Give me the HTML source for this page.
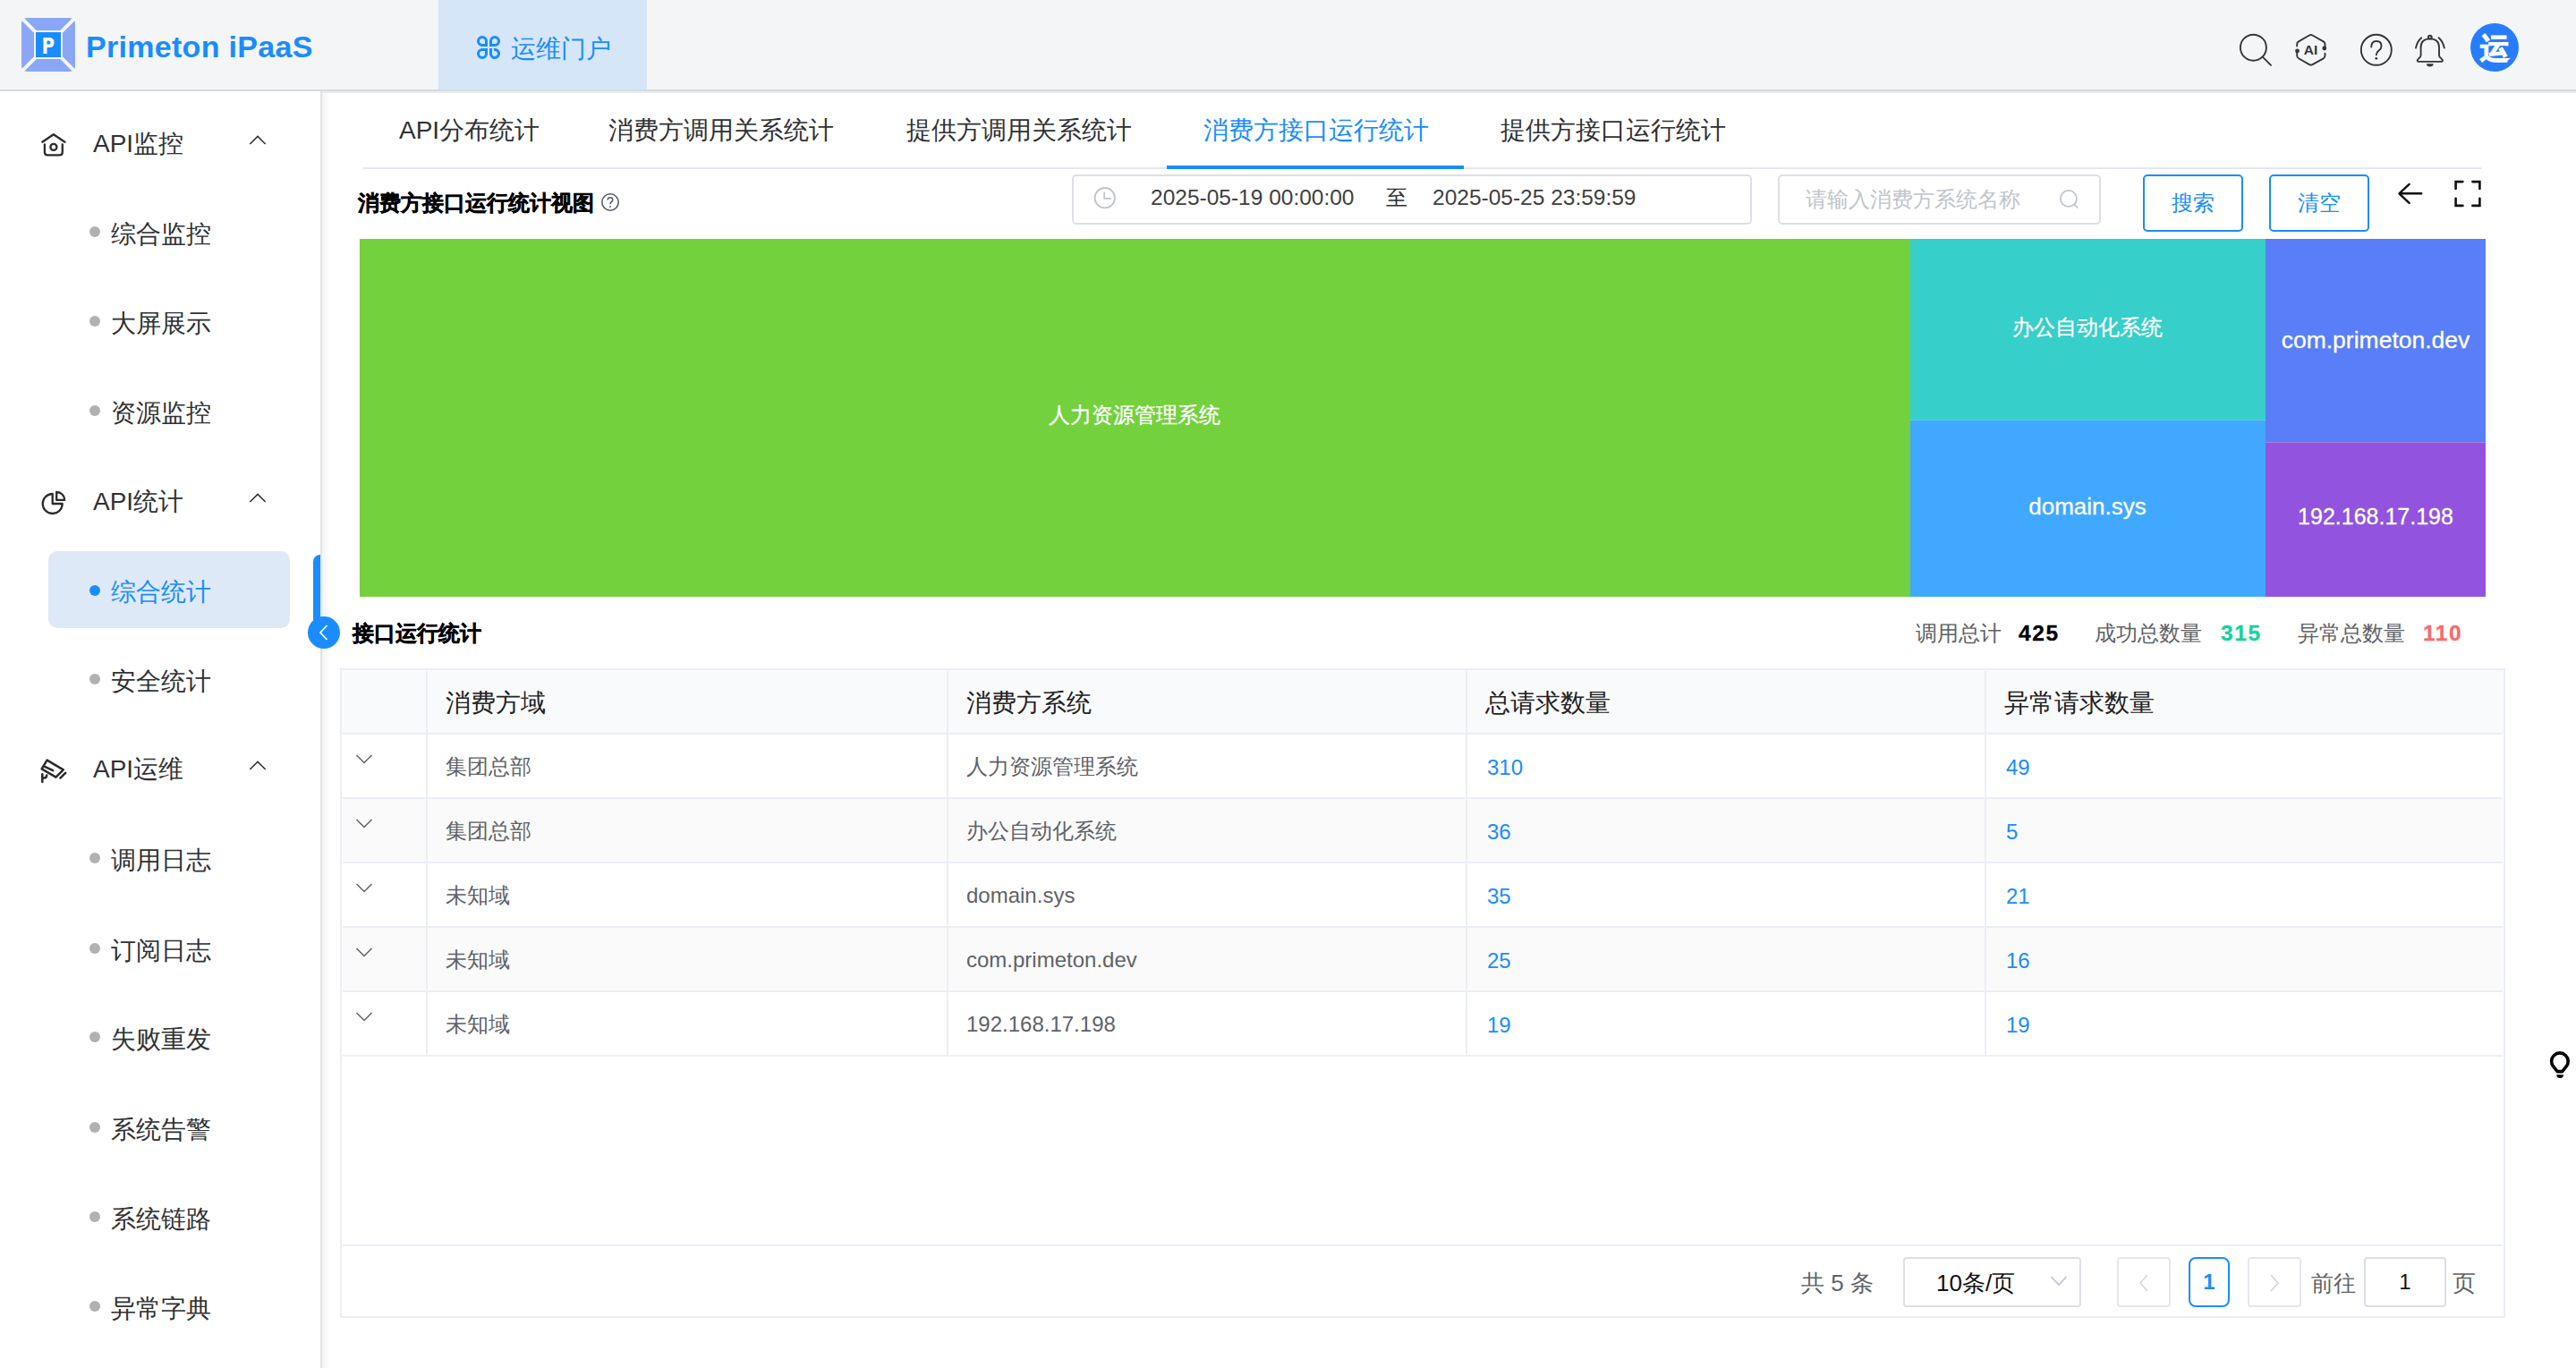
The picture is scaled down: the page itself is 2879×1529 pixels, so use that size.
<!DOCTYPE html>
<html><head><meta charset="utf-8">
<style>
*{box-sizing:border-box;margin:0;padding:0}
html,body{width:2879px;height:1529px;overflow:hidden;background:#fff;font-family:"Liberation Sans",sans-serif;color:#303133}
.a{position:absolute;white-space:nowrap}
#hdr{position:absolute;left:0;top:0;width:2879px;height:100px;background:#f4f5f7}
#hdrline{position:absolute;left:0;top:100px;width:2879px;height:2px;background:#dadada}
#hdrline2{position:absolute;left:360px;top:102px;width:2519px;height:2px;background:#e8ecf3}
#side{position:absolute;left:0;top:102px;width:358px;height:1427px;background:#fff}
#sideb{position:absolute;left:358px;top:102px;width:2px;height:1427px;background:#e2e2e2}
#sidesh{position:absolute;left:360px;top:104px;width:9px;height:1425px;background:linear-gradient(to right,#f3f3f3,#fff)}
.grp{font-size:28px;color:#303133;line-height:40px}
.sub{font-size:28px;color:#303133;line-height:40px}
.dot{position:absolute;width:12px;height:12px;border-radius:50%;background:#b1b1b1}
.tab{font-size:28px;line-height:40px;color:#303133}
.bd{font-size:24px;line-height:40px;color:#606266}
.hd{font-size:28px;line-height:40px;color:#222;margin-top:1px}
.num{font-size:24px;line-height:40px;color:#1a8cff;margin-top:1px}
.tm{font-size:24px;line-height:40px;color:#fff;text-align:center;-webkit-text-stroke:0.3px #fff}
</style></head><body>
<div id="hdr"></div>
<div id="hdrline"></div>
<!-- logo -->
<svg class="a" style="left:24px;top:20px" width="60" height="60" viewBox="0 0 60 60">
  <rect x="0" y="0" width="60" height="60" rx="6" fill="#8aa6f6"/>
  <path d="M0 0 L60 60 M60 0 L0 60" stroke="#f4f5f7" stroke-width="4"/>
  <rect x="14" y="14" width="32" height="32" fill="#f4f5f7"/>
  <rect x="16" y="16" width="28" height="28" fill="#1a8cff"/>
  <path d="M24.5 40 L24.5 22 L31 22 Q36.5 22 36.5 27.5 Q36.5 33 31 33 L28.5 33 L28.5 40 Z M28.5 25.5 L28.5 29.5 L30.5 29.5 Q32.5 29.5 32.5 27.5 Q32.5 25.5 30.5 25.5 Z" fill="#fff" fill-rule="evenodd"/>
</svg>
<div class="a" style="left:96px;top:30px;font-size:34px;line-height:44px;font-weight:bold;color:#1a8cff;letter-spacing:0.3px">Primeton iPaaS</div>
<!-- portal tab -->
<div class="a" style="left:490px;top:0;width:233px;height:100px;background:#d5e6f8"></div>
<svg class="a" style="left:532px;top:39px" width="28" height="28" viewBox="0 0 28 28" fill="none" stroke="#1a8cff" stroke-width="3">
  <path d="M11.5 11.5 H7 A4.5 4.5 0 1 1 11.5 7 Z"/>
  <path d="M16.5 11.5 V7 A4.5 4.5 0 1 1 21 11.5 Z"/>
  <path d="M11.5 16.5 V21 A4.5 4.5 0 1 1 7 16.5 Z"/>
  <path d="M16.5 15 V21 A4.5 4.5 0 1 0 20 16.6"/>
</svg>
<div class="a" style="left:571px;top:35px;font-size:28px;line-height:40px;color:#1a8cff">运维门户</div>
<!-- header icons -->
<svg class="a" style="left:2500px;top:35px" width="42" height="42" viewBox="0 0 42 42" fill="none" stroke="#353535" stroke-width="1.9" stroke-linecap="round">
  <circle cx="18.4" cy="18.2" r="14.5"/><path d="M28.8 28.6 L38 37.8"/>
</svg>
<svg class="a" style="left:2555px;top:30px" width="190" height="52" viewBox="0 0 190 52" fill="none" stroke="#353535" stroke-width="1.9" stroke-linecap="round" stroke-linejoin="round">
  <path d="M12.2 21.6 V19.3 Q12.2 17.3 14 16.3 L25.9 9.5 Q27.7 8.5 29.5 9.5 L41.7 16.3 Q43.5 17.3 43.5 19.3 V22.5"/>
  <path d="M43.5 29.6 V32.3 Q43.5 34.3 41.7 35.3 L29.5 42.1 Q27.7 43.1 25.9 42.1 L14 35.3 Q12.2 34.3 12.2 32.3 V27"/>
  <circle cx="12.5" cy="26.9" r="2.4" fill="#353535" stroke="none"/>
  <circle cx="42.8" cy="24" r="2.4" fill="#353535" stroke="none"/>
  <text x="27.6" y="30.7" font-family="Liberation Sans" font-weight="bold" font-size="15.5" fill="#353535" stroke="none" text-anchor="middle">AI</text>
  <circle cx="100.8" cy="25.8" r="17"/>
  <path d="M95.2 22.6 Q95.2 16 100.9 16 Q106.5 16 106.5 21.4 Q106.5 24.2 103.6 26.6 Q100.8 28.8 100.8 31.2"/>
  <circle cx="100.8" cy="35.3" r="1.4" fill="#353535" stroke="none"/>
  <circle cx="160.8" cy="11.6" r="1.9"/>
  <path d="M150.6 31.8 V23 Q150.6 13.4 160.8 13.4 Q171 13.4 171 23 V31.8 Q171 33.6 173.5 35.6 Q175.6 37.4 174.6 38.4 Q174.2 38.9 173 38.9 H148.6 Q147.4 38.9 147 38.4 Q146 37.4 148.1 35.6 Q150.6 33.6 150.6 31.8 Z"/>
  <path d="M157 41.3 H164.6 Q164.6 44.6 160.8 44.6 Q157 44.6 157 41.3 Z" fill="#353535" stroke="none"/>
  <path d="M145 23.6 Q146.5 16.3 151.2 12.2"/><path d="M176.8 23.6 Q175.3 16.3 170.6 12.2"/>
</svg>
<div class="a" style="left:2761px;top:26px;width:54px;height:54px;border-radius:50%;background:#277dfd;color:#fff;font-size:32px;font-weight:bold;line-height:56px;text-align:center;-webkit-text-stroke:1.3px #fff">运</div>

<!-- sidebar -->
<div id="side"></div>
<div id="sideb"></div>
<div id="sidesh"></div>
<div id="hdrline2"></div>
<svg class="a" style="left:36px;top:137px" width="50" height="50" viewBox="0 0 50 50" fill="none" stroke="#2b2b2b" stroke-width="2.3" stroke-linecap="round" stroke-linejoin="round">
  <path d="M11.3 21.7 L23.8 13.2 L36.5 21.7"/><path d="M13.9 24.5 V33 Q13.9 36.4 17.3 36.4 H30.4 Q33.8 36.4 33.8 33 V24.5"/><circle cx="23.9" cy="27.4" r="3.5"/>
</svg>
<svg class="a" style="left:36px;top:537px" width="50" height="50" viewBox="0 0 50 50" fill="none" stroke="#2b2b2b" stroke-width="2.3" stroke-linejoin="round">
  <path d="M22.7 15 A11 11 0 1 0 33.7 26 H22.7 Z"/><path d="M27.2 12.8 V21.9 H36.2 A9.2 9.2 0 0 0 27.2 12.8 Z"/>
</svg>
<svg class="a" style="left:36px;top:836px" width="50" height="50" viewBox="0 0 50 50" fill="none" stroke="#2b2b2b" stroke-width="2.5" stroke-linecap="round" stroke-linejoin="round">
  <path d="M16.6 13.6 L10.6 23.4 L26.5 32.6 L34.8 24.3 Z"/><path d="M14 20.8 L23.2 25.2"/><path d="M31.4 33.6 L37.2 27.9"/><path d="M11.3 29.2 V38"/><path d="M11.3 33.6 H13.5 Q16.2 33.6 16.2 30.6"/>
</svg>
<div class="a grp" style="left:104px;top:141px">API监控</div>
<svg class="a" style="left:277px;top:150px" width="22" height="14" viewBox="0 0 22 14" fill="none" stroke="#333" stroke-width="1.6"><path d="M2.3 11 L11 2.4 L19.7 11"/></svg>
<div class="a grp" style="left:104px;top:541px">API统计</div>
<svg class="a" style="left:277px;top:550px" width="22" height="14" viewBox="0 0 22 14" fill="none" stroke="#333" stroke-width="1.6"><path d="M2.3 11 L11 2.4 L19.7 11"/></svg>
<div class="a grp" style="left:104px;top:840px">API运维</div>
<svg class="a" style="left:277px;top:849px" width="22" height="14" viewBox="0 0 22 14" fill="none" stroke="#333" stroke-width="1.6"><path d="M2.3 11 L11 2.4 L19.7 11"/></svg>
<div class="a" style="left:54px;top:616px;width:270px;height:86px;border-radius:10px;background:#dee9f7"></div>
<div class="dot" style="left:100px;top:253px;background:#b1b1b1"></div>
<div class="a sub" style="left:124px;top:242px;color:#303133">综合监控</div>
<div class="dot" style="left:100px;top:353px;background:#b1b1b1"></div>
<div class="a sub" style="left:124px;top:342px;color:#303133">大屏展示</div>
<div class="dot" style="left:100px;top:453px;background:#b1b1b1"></div>
<div class="a sub" style="left:124px;top:442px;color:#303133">资源监控</div>
<div class="dot" style="left:100px;top:654px;background:#1a8cff"></div>
<div class="a sub" style="left:124px;top:642px;color:#1a8cff">综合统计</div>
<div class="dot" style="left:100px;top:753px;background:#b1b1b1"></div>
<div class="a sub" style="left:124px;top:742px;color:#303133">安全统计</div>
<div class="dot" style="left:100px;top:953px;background:#b1b1b1"></div>
<div class="a sub" style="left:124px;top:942px;color:#303133">调用日志</div>
<div class="dot" style="left:100px;top:1054px;background:#b1b1b1"></div>
<div class="a sub" style="left:124px;top:1043px;color:#303133">订阅日志</div>
<div class="dot" style="left:100px;top:1153px;background:#b1b1b1"></div>
<div class="a sub" style="left:124px;top:1142px;color:#303133">失败重发</div>
<div class="dot" style="left:100px;top:1254px;background:#b1b1b1"></div>
<div class="a sub" style="left:124px;top:1243px;color:#303133">系统告警</div>
<div class="dot" style="left:100px;top:1354px;background:#b1b1b1"></div>
<div class="a sub" style="left:124px;top:1343px;color:#303133">系统链路</div>
<div class="dot" style="left:100px;top:1454px;background:#b1b1b1"></div>
<div class="a sub" style="left:124px;top:1443px;color:#303133">异常字典</div>
<div class="a" style="left:350px;top:620px;width:8px;height:80px;border-radius:8px 0 0 8px;background:#1a8cff"></div>
<svg class="a" style="left:344px;top:689px" width="36" height="36" viewBox="0 0 36 36"><circle cx="18" cy="18" r="18" fill="#1a8cff"/><path d="M21.5 10 L14 18 L21.5 26" fill="none" stroke="#fff" stroke-width="1.7"/></svg>
<div class="a tab" style="margin-top:1px;left:446px;top:125px;color:#303133">API分布统计</div>
<div class="a tab" style="margin-top:1px;left:680px;top:125px;color:#303133">消费方调用关系统计</div>
<div class="a tab" style="margin-top:1px;left:1013px;top:125px;color:#303133">提供方调用关系统计</div>
<div class="a tab" style="margin-top:1px;left:1345px;top:125px;color:#1a8cff">消费方接口运行统计</div>
<div class="a tab" style="margin-top:1px;left:1677px;top:125px;color:#303133">提供方接口运行统计</div>
<div class="a" style="left:406px;top:187px;width:2367px;height:2px;background:#e4e7ed"></div>
<div class="a" style="left:1304px;top:185px;width:332px;height:4px;background:#1a8cff"></div>
<div class="a" style="left:400px;top:207px;font-size:24px;line-height:40px;font-weight:bold;color:#000;-webkit-text-stroke:0.4px #000">消费方接口运行统计视图</div>
<svg class="a" style="left:670px;top:214px" width="24" height="24" viewBox="0 0 24 24" fill="none" stroke="#555b66" stroke-width="1.6"><circle cx="12" cy="12" r="9.2"/><path d="M9.2 9.6 Q9.2 6.8 12 6.8 Q14.8 6.8 14.8 9.4 Q14.8 11 13 12 Q12 12.6 12 14.2"/><circle cx="12" cy="17" r="0.9" fill="#555b66" stroke="none"/></svg>
<div class="a" style="left:1198px;top:195px;width:760px;height:56px;border:2px solid #dcdfe6;border-radius:5px;background:#fff"></div>
<svg class="a" style="left:1220px;top:208px" width="30" height="28" viewBox="0 0 30 28" fill="none" stroke="#c0c4cc" stroke-width="1.8"><circle cx="14.8" cy="13.2" r="11.2"/><path d="M14.2 6.5 V13.9 H21.7"/></svg>
<div class="a" style="left:1286px;top:201px;font-size:24.5px;line-height:40px;color:#404040">2025-05-19 00:00:00</div>
<div class="a" style="left:1549px;top:201px;font-size:24px;line-height:40px;color:#303133">至</div>
<div class="a" style="left:1601px;top:201px;font-size:24.5px;line-height:40px;color:#404040">2025-05-25 23:59:59</div>
<div class="a" style="left:1987px;top:195px;width:361px;height:56px;border:2px solid #dcdfe6;border-radius:5px;background:#fff"></div>
<div class="a" style="left:2018px;top:203px;font-size:24px;line-height:40px;color:#c0c4cc">请输入消费方系统名称</div>
<svg class="a" style="left:2299px;top:209px" width="28" height="28" viewBox="0 0 28 28" fill="none" stroke="#c0c4cc" stroke-width="1.8" stroke-linecap="round"><circle cx="12.9" cy="12.9" r="9"/><path d="M19.3 19.3 L22.7 23"/></svg>
<div class="a" style="left:2395px;top:195px;width:112px;height:64px;border:2px solid #1a8cff;border-radius:5px;background:#fff;color:#1a8cff;font-size:24px;line-height:60px;text-align:center">搜索</div>
<div class="a" style="left:2536px;top:195px;width:112px;height:64px;border:2px solid #1a8cff;border-radius:5px;background:#fff;color:#1a8cff;font-size:24px;line-height:60px;text-align:center">清空</div>
<svg class="a" style="left:2678px;top:202px" width="32" height="28" viewBox="0 0 32 28" fill="none" stroke="#111" stroke-width="2.4" stroke-linecap="round" stroke-linejoin="round"><path d="M28.2 14.3 H3.6 M14.6 3.9 L3.4 14.3 L14.6 24.9"/></svg>
<svg class="a" style="left:2742px;top:200px" width="32" height="32" viewBox="0 0 32 32" fill="none" stroke="#111" stroke-width="2.6" stroke-linecap="round"><path d="M2.6 11 V3.1 H10.4 M21.4 3.1 H29.4 V11 M29.4 21.8 V29.9 H21.4 M10.4 29.9 H2.6 V21.8"/></svg>
<div class="a" style="left:402px;top:267px;width:1733px;height:400px;background:#73d13d"></div>
<div class="a" style="left:2135px;top:267px;width:397px;height:202px;background:#36cfc9"></div>
<div class="a" style="left:2135px;top:469px;width:397px;height:198px;background:#40a9ff;border-top:1px solid #5ccde6"></div>
<div class="a" style="left:2532px;top:267px;width:246px;height:227px;background:#597ef7"></div>
<div class="a" style="left:2532px;top:494px;width:246px;height:173px;background:#9254de;border-top:1px solid #a97ee3"></div>
<div class="a tm" style="left:1068px;top:444px;width:400px;font-size:24px">人力资源管理系统</div>
<div class="a tm" style="left:2133px;top:346px;width:400px;font-size:24px">办公自动化系统</div>
<div class="a tm" style="left:2133px;top:546px;width:400px;font-size:26px">domain.sys</div>
<div class="a tm" style="left:2455px;top:360px;width:400px;font-size:26.5px">com.primeton.dev</div>
<div class="a tm" style="left:2455px;top:557px;width:400px;font-size:25px">192.168.17.198</div>
<div class="a" style="left:394px;top:688px;font-size:24px;line-height:40px;font-weight:bold;color:#000;-webkit-text-stroke:0.4px #000">接口运行统计</div>
<div class="a" style="left:2141px;top:688px;font-size:24px;line-height:40px;color:#606266">调用总计</div>
<div class="a" style="left:2256px;top:688px;font-size:24.5px;line-height:40px;font-weight:bold;color:#000;letter-spacing:1.6px;-webkit-text-stroke:0.3px #000">425</div>
<div class="a" style="left:2341px;top:688px;font-size:24px;line-height:40px;color:#606266">成功总数量</div>
<div class="a" style="left:2482px;top:688px;font-size:24.5px;line-height:40px;font-weight:bold;color:#17d29c;letter-spacing:1.6px;-webkit-text-stroke:0.3px #17d29c">315</div>
<div class="a" style="left:2568px;top:688px;font-size:24px;line-height:40px;color:#606266">异常总数量</div>
<div class="a" style="left:2708px;top:688px;font-size:24.5px;line-height:40px;font-weight:bold;color:#f56c6c;letter-spacing:1.6px;-webkit-text-stroke:0.3px #f56c6c">110</div>
<div class="a" style="left:380px;top:747px;width:2420px;height:726px;border:2px solid #ebeef5;background:#fff"></div>
<div class="a" style="left:382px;top:749px;width:2416px;height:71px;background:#f9fafb"></div>
<div class="a" style="left:383px;top:892px;width:2414px;height:72px;background:#fafafa"></div>
<div class="a" style="left:383px;top:1036px;width:2414px;height:72px;background:#fafafa"></div>
<div class="a" style="left:383px;top:819px;width:2414px;height:2px;background:#ebeef5"></div>
<div class="a" style="left:383px;top:891px;width:2414px;height:2px;background:#ebeef5"></div>
<div class="a" style="left:383px;top:963px;width:2414px;height:2px;background:#ebeef5"></div>
<div class="a" style="left:383px;top:1035px;width:2414px;height:2px;background:#ebeef5"></div>
<div class="a" style="left:383px;top:1107px;width:2414px;height:2px;background:#ebeef5"></div>
<div class="a" style="left:383px;top:1179px;width:2414px;height:2px;background:#ebeef5"></div>
<div class="a" style="left:476px;top:750px;width:2px;height:430px;background:#ebeef5"></div>
<div class="a" style="left:1058px;top:750px;width:2px;height:430px;background:#ebeef5"></div>
<div class="a" style="left:1638px;top:750px;width:2px;height:430px;background:#ebeef5"></div>
<div class="a" style="left:2218px;top:750px;width:2px;height:430px;background:#ebeef5"></div>
<div class="a hd" style="left:498px;top:765px">消费方域</div>
<div class="a hd" style="left:1080px;top:765px">消费方系统</div>
<div class="a hd" style="left:1660px;top:765px">总请求数量</div>
<div class="a hd" style="left:2240px;top:765px">异常请求数量</div>
<svg class="a" style="left:396px;top:842px" width="22" height="14" viewBox="0 0 22 14" fill="none" stroke="#606266" stroke-width="1.5"><path d="M2.5 2 L11 10.5 L19.5 2"/></svg>
<div class="a bd" style="left:498px;top:837px">集团总部</div>
<div class="a bd" style="left:1080px;top:837px">人力资源管理系统</div>
<div class="a num" style="left:1662px;top:837px">310</div>
<div class="a num" style="left:2242px;top:837px">49</div>
<svg class="a" style="left:396px;top:914px" width="22" height="14" viewBox="0 0 22 14" fill="none" stroke="#606266" stroke-width="1.5"><path d="M2.5 2 L11 10.5 L19.5 2"/></svg>
<div class="a bd" style="left:498px;top:909px">集团总部</div>
<div class="a bd" style="left:1080px;top:909px">办公自动化系统</div>
<div class="a num" style="left:1662px;top:909px">36</div>
<div class="a num" style="left:2242px;top:909px">5</div>
<svg class="a" style="left:396px;top:986px" width="22" height="14" viewBox="0 0 22 14" fill="none" stroke="#606266" stroke-width="1.5"><path d="M2.5 2 L11 10.5 L19.5 2"/></svg>
<div class="a bd" style="left:498px;top:981px">未知域</div>
<div class="a bd" style="left:1080px;top:981px">domain.sys</div>
<div class="a num" style="left:1662px;top:981px">35</div>
<div class="a num" style="left:2242px;top:981px">21</div>
<svg class="a" style="left:396px;top:1058px" width="22" height="14" viewBox="0 0 22 14" fill="none" stroke="#606266" stroke-width="1.5"><path d="M2.5 2 L11 10.5 L19.5 2"/></svg>
<div class="a bd" style="left:498px;top:1053px">未知域</div>
<div class="a bd" style="left:1080px;top:1053px">com.primeton.dev</div>
<div class="a num" style="left:1662px;top:1053px">25</div>
<div class="a num" style="left:2242px;top:1053px">16</div>
<svg class="a" style="left:396px;top:1130px" width="22" height="14" viewBox="0 0 22 14" fill="none" stroke="#606266" stroke-width="1.5"><path d="M2.5 2 L11 10.5 L19.5 2"/></svg>
<div class="a bd" style="left:498px;top:1125px">未知域</div>
<div class="a bd" style="left:1080px;top:1125px">192.168.17.198</div>
<div class="a num" style="left:1662px;top:1125px">19</div>
<div class="a num" style="left:2242px;top:1125px">19</div>
<div class="a" style="left:383px;top:1391px;width:2414px;height:2px;background:#ebeef5"></div>
<div class="a" style="left:2013px;top:1414px;font-size:26px;line-height:40px;color:#606266">共 5 条</div>
<div class="a" style="left:2127px;top:1405px;width:199px;height:56px;border:2px solid #dcdfe6;border-radius:4px;background:#fff"></div>
<div class="a" style="left:2164px;top:1414px;font-size:26px;line-height:40px;color:#111">10条/页</div>
<svg class="a" style="left:2290px;top:1425px" width="22" height="14" viewBox="0 0 22 14" fill="none" stroke="#c0c4cc" stroke-width="1.8"><path d="M2.5 2 L11 11 L19.5 2"/></svg>
<div class="a" style="left:2366px;top:1405px;width:60px;height:56px;border:2px solid #e4e7ed;border-radius:4px;background:#fff"></div>
<svg class="a" style="left:2386px;top:1422px" width="20" height="24" viewBox="0 0 20 24" fill="none" stroke="#d4d7dd" stroke-width="1.7"><path d="M14 3 L6 12 L14 21"/></svg>
<div class="a" style="left:2446px;top:1405px;width:46px;height:56px;border:2px solid #1a8cff;border-radius:8px;background:#fff;color:#1a8cff;font-size:24px;font-weight:bold;line-height:51px;text-align:center">1</div>
<div class="a" style="left:2512px;top:1405px;width:60px;height:56px;border:2px solid #e4e7ed;border-radius:4px;background:#fff"></div>
<svg class="a" style="left:2532px;top:1422px" width="20" height="24" viewBox="0 0 20 24" fill="none" stroke="#d4d7dd" stroke-width="1.7"><path d="M6 3 L14 12 L6 21"/></svg>
<div class="a" style="left:2583px;top:1414px;font-size:25px;line-height:40px;color:#606266">前往</div>
<div class="a" style="left:2642px;top:1405px;width:92px;height:56px;border:2px solid #dcdfe6;border-radius:4px;background:#fff;color:#111;font-size:24px;line-height:51px;text-align:center">1</div>
<div class="a" style="left:2741px;top:1414px;font-size:26px;line-height:40px;color:#606266">页</div>
<svg class="a" style="left:2839px;top:1165px" width="40" height="50" viewBox="0 0 40 50"><path d="M14.8 27.2 A9.3 9.3 0 1 1 29 27.2 L24.6 32.6 H19.2 Z" fill="none" stroke="#000" stroke-width="3.6" stroke-linejoin="round"/><path d="M18.3 36.2 H26 Q26 40 22.15 40 Q18.3 40 18.3 36.2 Z" fill="#000"/></svg>
</body></html>
